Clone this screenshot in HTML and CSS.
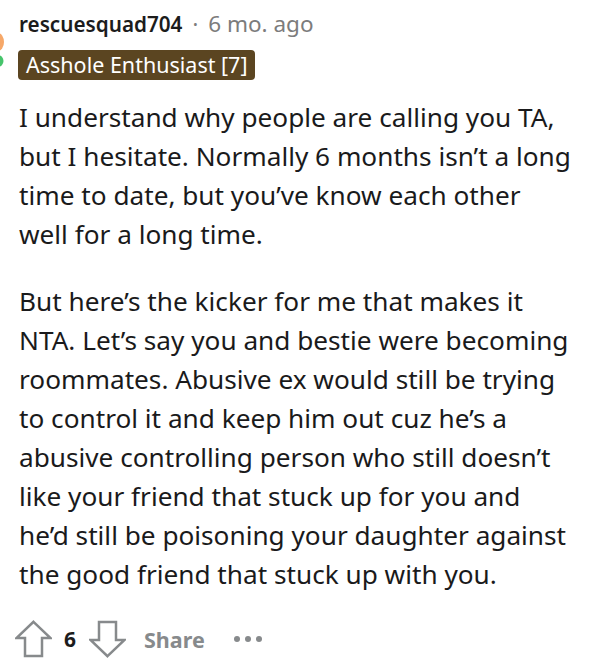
FILE: index.html
```html
<!DOCTYPE html>
<html>
<head>
<meta charset="utf-8">
<link rel="stylesheet" href="styles.css">
</head>
<body>
<div class="comment">
  <div class="gutter">
    <svg class="avatar" width="19" height="80" viewBox="0 0 19 80">
      <ellipse cx="-2" cy="42" rx="6" ry="9" fill="#f6a869"/>
      <ellipse cx="-2" cy="61" rx="5.5" ry="6" fill="#46c46b"/>
    </svg>
  </div>
  <div class="main">
    <div class="meta">
      <span class="author">rescuesquad704</span>
      <span class="dot">·</span>
      <span class="time">6 mo. ago</span>
    </div>
    <div class="flair">Asshole Enthusiast [7]</div>
    <div class="body">
      <p>I understand why people are calling you TA, but I hesitate. Normally 6 months isn’t a long time to date, but you’ve know each other well for a long time.</p>
      <p>But here’s the kicker for me that makes it NTA. Let’s say you and bestie were becoming roommates. Abusive ex would still be trying to control it and keep him out cuz he’s a abusive controlling person who still doesn’t like your friend that stuck up for you and he’d still be poisoning your daughter against the good friend that stuck up with you.</p>
    </div>
    <div class="actions">
      <svg class="vote" width="37" height="38" viewBox="0 0 37 38">
        <path d="M18.5 1.8 L35.5 18 L27 18 L27 36 L10 36 L10 18 L1.5 18 Z" fill="none" stroke="#878a8c" stroke-width="2.5" stroke-linejoin="miter"/>
      </svg>
      <span class="score">6</span>
      <svg class="vote" width="37" height="38" viewBox="0 0 37 38">
        <path d="M18.5 36.2 L35.5 20 L27 20 L27 2 L10 2 L10 20 L1.5 20 Z" fill="none" stroke="#878a8c" stroke-width="2.5" stroke-linejoin="miter"/>
      </svg>
      <span class="share">Share</span>
      <svg class="more" width="30" height="8" viewBox="0 0 30 8">
        <circle cx="4" cy="4" r="3" fill="#878a8c"/>
        <circle cx="15" cy="4" r="3" fill="#878a8c"/>
        <circle cx="26" cy="4" r="3" fill="#878a8c"/>
      </svg>
    </div>
  </div>
</div>
</body>
</html>
```

FILE: styles.css
```css
html, body {
  margin: 0;
  padding: 0;
  background: #ffffff;
}

.comment {
  display: flex;
  width: 595px;
  height: 672px;
  overflow: hidden;
}

.gutter {
  width: 19px;
  flex: none;
}

.avatar {
  display: block;
}

.main {
  flex: 1;
  display: flex;
  flex-direction: column;
  padding-top: 9px;
}

.meta {
  font-family: "Noto Sans", sans-serif;
  font-size: 21.5px;
  line-height: 30px;
  display: flex;
  align-items: baseline;
  gap: 10px;
}

.author {
  font-weight: 600;
  font-size: 20.7px;
  color: #1c1c1c;
}

.dot, .time {
  color: #7c7c7c;
  font-weight: 400;
}

.time {
  font-size: 22.5px;
}

.flair {
  align-self: flex-start;
  margin-top: 11px;
  margin-left: -1px;
  background: #5b4521;
  color: #ffffff;
  font-family: "Noto Sans", sans-serif;
  font-size: 21.5px;
  line-height: 30px;
  padding: 0 8px;
  border-radius: 4px;
}

.body {
  font-family: "Noto Sans", sans-serif;
  font-size: 26.2px;
  line-height: 39px;
  color: #1a1a1b;
  padding-right: 20px;
  margin-top: 18px;
}

.body p {
  margin: 0 0 28px 0;
}

.actions {
  display: flex;
  align-items: center;
  margin-left: -4px;
  margin-top: -2px;
}

.score {
  font-family: "Noto Sans", sans-serif;
  font-weight: 700;
  font-size: 21px;
  color: #1c1c1c;
  margin: 0 13px 0 12px;
}

.share {
  font-family: "Noto Sans", sans-serif;
  font-weight: 700;
  font-size: 21.5px;
  color: #878a8c;
  margin-left: 18px;
}

.more {
  margin-left: 28px;
}
```
